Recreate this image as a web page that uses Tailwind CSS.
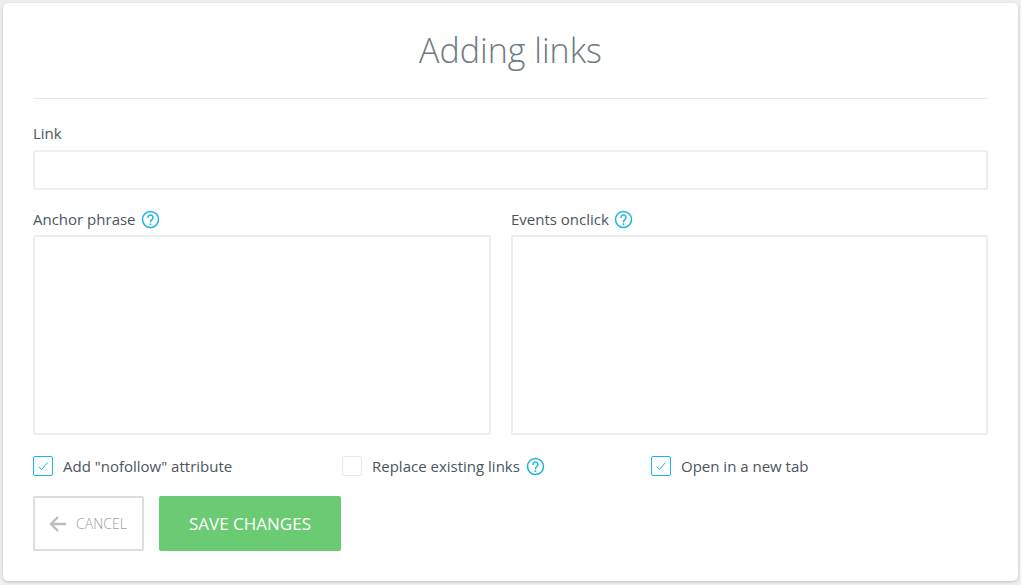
<!DOCTYPE html>
<html lang="en">
  <head>
    <meta charset="UTF-8">
    <title>Adding links</title>
    <script src="https://cdn.jsdelivr.net/npm/@tailwindcss/browser@4"></script>
  </head>
  <body class="bg-[#eeeeee] font-['Open_Sans',sans-serif] h-[585px] overflow-hidden">
    <div class="ml-[3px] mt-[3px] w-[1015px] h-[578px] bg-white rounded-[5px] shadow-[0_1px_3px_rgba(0,0,0,0.2)] px-[30px]">
      <h1 class="h-[96px] border-b border-[#e8e8e8] pt-[24px] text-center text-[34px] leading-[46px] font-light text-[#6f7a82]">Adding links</h1>

      <label class="block mt-[24px] text-[15px] leading-[20px] text-[#4a5560]">Link</label>
      <input type="text" class="block mt-[7px] w-full h-[40px] border-2 border-[#eeeeee] rounded-[2px] outline-none">

      <div class="mt-[19px] flex gap-[20px]">
        <div class="w-[458px]">
          <div class="flex items-center gap-[5px] h-[20px] text-[15px] text-[#4a5560]">
            Anchor phrase
            <svg class="w-[19px] h-[19px]" viewBox="0 0 19 19" fill="none" stroke="#1ab4e0" stroke-width="1.5"><circle cx="9.5" cy="9.5" r="8"/><path d="M7 7.6a2.5 2.5 0 1 1 3.9 2c-.9.6-1.4 1-1.4 2.2" stroke-linecap="round"/><circle cx="9.5" cy="14.2" r="0.9" fill="#1ab4e0" stroke="none"/></svg>
          </div>
          <textarea class="block mt-[6px] w-full h-[200px] border-2 border-[#eeeeee] rounded-[2px] outline-none resize-none"></textarea>
        </div>
        <div class="w-[477px]">
          <div class="flex items-center gap-[5px] h-[20px] text-[15px] text-[#4a5560]">
            Events onclick
            <svg class="w-[19px] h-[19px]" viewBox="0 0 19 19" fill="none" stroke="#1ab4e0" stroke-width="1.5"><circle cx="9.5" cy="9.5" r="8"/><path d="M7 7.6a2.5 2.5 0 1 1 3.9 2c-.9.6-1.4 1-1.4 2.2" stroke-linecap="round"/><circle cx="9.5" cy="14.2" r="0.9" fill="#1ab4e0" stroke="none"/></svg>
          </div>
          <textarea class="block mt-[6px] w-full h-[200px] border-2 border-[#eeeeee] rounded-[2px] outline-none resize-none"></textarea>
        </div>
      </div>

      <div class="mt-[21px] flex text-[15px] text-[#4a5560]">
        <div class="w-[309px] flex items-center gap-[10px] h-[20px]">
          <span class="w-[20px] h-[20px] border border-[#1ab4f0] rounded-[2px] flex items-center justify-center">
            <svg class="w-[12px] h-[12px]" viewBox="0 0 12 12" fill="none" stroke="#1ab4f0" stroke-width="1"><path d="M1.5 6.5l3 3 6-7"/></svg>
          </span>
          Add "nofollow" attribute
        </div>
        <div class="w-[309px] flex items-center gap-[10px] h-[20px]">
          <span class="w-[20px] h-[20px] border border-[#e8e8e8] rounded-[2px]"></span>
          Replace existing links
          <svg class="w-[19px] h-[19px] -ml-[4px]" viewBox="0 0 19 19" fill="none" stroke="#1ab4e0" stroke-width="1.5"><circle cx="9.5" cy="9.5" r="8"/><path d="M7 7.6a2.5 2.5 0 1 1 3.9 2c-.9.6-1.4 1-1.4 2.2" stroke-linecap="round"/><circle cx="9.5" cy="14.2" r="0.9" fill="#1ab4e0" stroke="none"/></svg>
        </div>
        <div class="flex items-center gap-[10px] h-[20px]">
          <span class="w-[20px] h-[20px] border border-[#1ab4f0] rounded-[2px] flex items-center justify-center">
            <svg class="w-[12px] h-[12px]" viewBox="0 0 12 12" fill="none" stroke="#1ab4f0" stroke-width="1"><path d="M1.5 6.5l3 3 6-7"/></svg>
          </span>
          Open in a new tab
        </div>
      </div>

      <div class="mt-[20px] flex gap-[15px]">
        <button class="w-[111px] h-[55px] border-2 border-[#dddddd] rounded-[2px] flex items-center justify-center gap-[10px] text-[14px] font-light text-[#a0a0a0] bg-white pr-[1px]">
          <svg class="w-[17px] h-[16px]" viewBox="0 0 17 16" fill="none" stroke="#bdbdbd" stroke-width="2.4"><path d="M17 8H2M9 1L2 8l7 7"/></svg>
          CANCEL
        </button>
        <button class="w-[182px] h-[55px] rounded-[2px] bg-[#6bcb72] text-white text-[17px] font-medium">SAVE CHANGES</button>
      </div>
    </div>
  </body>
</html>
